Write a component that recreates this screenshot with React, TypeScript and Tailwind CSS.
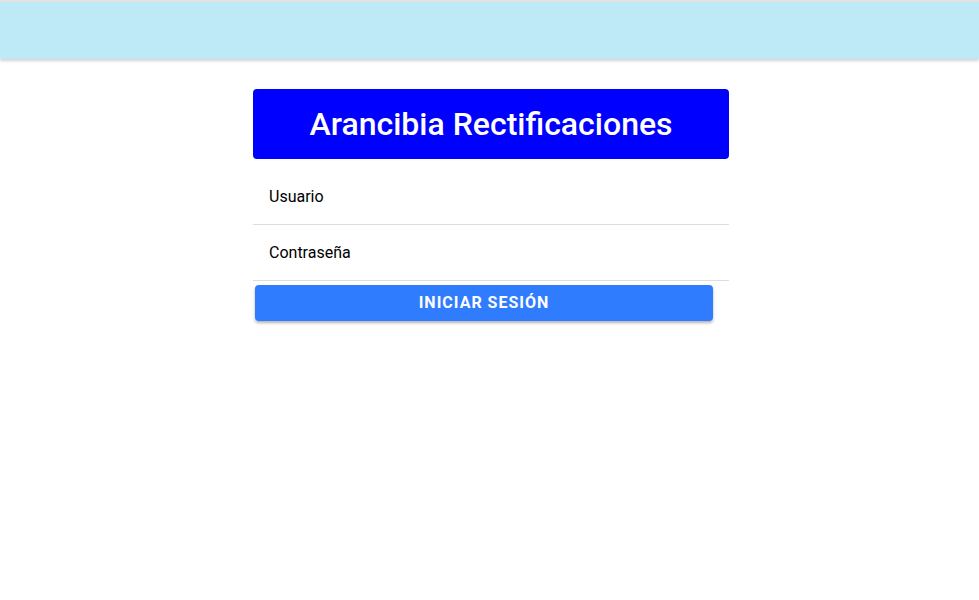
export default function App() {
  return (
    <div className="min-h-[600px] bg-white font-['Roboto',_'Liberation_Sans',_sans-serif]">
      <header className="h-[59px] border-t-2 border-[#e2e2e2] bg-[#bee9f6] shadow-[0_2px_3px_rgba(0,0,0,0.18)]" />
      <main className="flex justify-center pl-[3px] pt-[30px]">
        <div className="w-[476px]">
          <div className="flex h-[70px] items-center justify-center rounded bg-[#0000ff]">
            <h1 className="text-[32px] font-medium leading-none text-white">Arancibia Rectificaciones</h1>
          </div>
          <div className="mt-[10px]">
            <input
              className="block h-[56px] w-full border-b border-[#dddddd] px-4 text-[16px] text-black outline-none placeholder:text-black"
              placeholder="Usuario"
            />
            <input
              type="password"
              className="block h-[56px] w-full border-b border-[#dddddd] px-4 text-[16px] text-black outline-none placeholder:text-black"
              placeholder="Contraseña"
            />
          </div>
          <button className="ml-[2px] mt-[4px] flex h-[36px] w-[458px] items-center justify-center rounded bg-[#2f7cff] text-[16px] font-bold uppercase tracking-[1px] text-white shadow-[0_2px_3px_rgba(0,0,0,0.3)]">
            Iniciar sesión
          </button>
        </div>
      </main>
    </div>
  );
}
